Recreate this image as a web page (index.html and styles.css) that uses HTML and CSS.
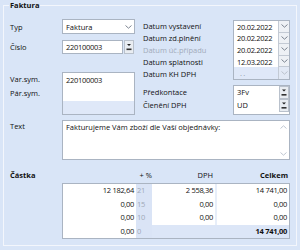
FILE: index.html
```html
<!DOCTYPE html>
<html lang="cs">
<head>
<meta charset="utf-8">
<link rel="stylesheet" href="styles.css">
</head>
<body>
<fieldset class="frame">
  <legend class="frame-title">Faktura</legend>
  <div class="top">
    <div class="left">
      <div class="field">
        <span class="lbl">Typ</span>
        <div class="combo">
          <span class="combo-val">Faktura</span>
          <svg class="chev" width="7" height="4" viewBox="0 0 7 4"><path d="M0.5 0.5 L3.5 3.2 L6.5 0.5" fill="none" stroke="#6f7886" stroke-width="0.9"/></svg>
        </div>
      </div>
      <div class="field field-num">
        <span class="lbl">Číslo</span>
        <span class="input num-input">220100003</span>
        <span class="lookup-btn"><svg width="8" height="12" viewBox="0 0 8 12"><path d="M2 3 L6 3 L4 5 Z" fill="#222"/><rect x="1.5" y="7.5" width="5" height="1.6" fill="#333"/></svg></span>
      </div>
      <div class="field field-sym">
        <div class="lbl-col">
          <span class="lbl-row">Var.sym.</span>
          <span class="lbl-row">Pár.sym.</span>
        </div>
        <div class="symbox">
          <span class="sym-cell">220100003</span>
          <span class="sym-cell"></span>
          <span class="sym-rest"></span>
        </div>
      </div>
    </div>
    <div class="right">
      <div class="group">
        <div class="lbl-col">
          <span class="date-lbl">Datum vystavení</span>
          <span class="date-lbl">Datum zd.plnění</span>
          <span class="date-lbl disabled">Datum úč.případu</span>
          <span class="date-lbl">Datum splatnosti</span>
          <span class="date-lbl">Datum KH DPH</span>
        </div>
        <div class="datebox">
          <div class="drow"><span class="dval">20.02.2022</span><span class="dbtn"><svg width="7" height="4" viewBox="0 0 7 4"><path d="M0.5 0.5 L3.5 3.2 L6.5 0.5" fill="none" stroke="#6f7886" stroke-width="0.9"/></svg></span></div>
          <div class="drow"><span class="dval">20.02.2022</span><span class="dbtn"><svg width="7" height="4" viewBox="0 0 7 4"><path d="M0.5 0.5 L3.5 3.2 L6.5 0.5" fill="none" stroke="#6f7886" stroke-width="0.9"/></svg></span></div>
          <div class="drow"><span class="dval">20.02.2022</span><span class="dbtn"><svg width="7" height="4" viewBox="0 0 7 4"><path d="M0.5 0.5 L3.5 3.2 L6.5 0.5" fill="none" stroke="#6f7886" stroke-width="0.9"/></svg></span></div>
          <div class="drow"><span class="dval">12.03.2022</span><span class="dbtn"><svg width="7" height="4" viewBox="0 0 7 4"><path d="M0.5 0.5 L3.5 3.2 L6.5 0.5" fill="none" stroke="#6f7886" stroke-width="0.9"/></svg></span></div>
          <div class="drow drow-off"><span class="dval">. .</span><span class="dbtn"><svg width="7" height="4" viewBox="0 0 7 4"><path d="M0.5 0.5 L3.5 3.2 L6.5 0.5" fill="none" stroke="#b5bcc7" stroke-width="0.9"/></svg></span></div>
        </div>
      </div>
      <div class="group group-pred">
        <div class="lbl-col pred-lbls">
          <span class="pred-lbl">Předkontace</span>
          <span class="pred-lbl">Členění DPH</span>
        </div>
        <div class="predbox">
          <span class="pval">3Fv</span>
          <span class="lookup-btn small"><svg width="8" height="11" viewBox="0 0 8 11"><path d="M2 2.5 L6 2.5 L4 4.5 Z" fill="#222"/><rect x="1.5" y="7" width="5" height="1.6" fill="#333"/></svg></span>
          <span class="pval">UD</span>
          <span class="lookup-btn small"><svg width="8" height="11" viewBox="0 0 8 11"><path d="M2 2.5 L6 2.5 L4 4.5 Z" fill="#222"/><rect x="1.5" y="7" width="5" height="1.6" fill="#333"/></svg></span>
        </div>
      </div>
    </div>
  </div>
  <div class="text-row">
    <span class="lbl text-lbl">Text</span>
    <div class="memo">
      <span class="memo-text">Fakturujeme Vám zboží dle Vaší objednávky:</span>
      <span class="memo-bar">
        <svg width="7" height="4" viewBox="0 0 7 4"><path d="M0.5 3.5 L3.5 0.8 L6.5 3.5" fill="none" stroke="#b8c0cc" stroke-width="0.9"/></svg>
        <svg width="7" height="4" viewBox="0 0 7 4"><path d="M0.5 0.5 L3.5 3.2 L6.5 0.5" fill="none" stroke="#b8c0cc" stroke-width="0.9"/></svg>
      </span>
    </div>
  </div>
  <div class="sum-head">
    <span class="sh-title">Částka</span>
    <span class="sh-pct">+ %</span>
    <span class="sh-dph">DPH</span>
    <span class="sh-total">Celkem</span>
  </div>
  <div class="sum-row">
    <div class="sum-table">
      <span class="c amt">12 182,64</span><span class="c pct">21</span><span class="c dph">2 558,36</span><span class="c gap"></span><span class="c tot">14 741,00</span>
      <span class="c amt">0,00</span><span class="c pct">15</span><span class="c dph">0,00</span><span class="c gap"></span><span class="c tot">0,00</span>
      <span class="c amt">0,00</span><span class="c pct">10</span><span class="c dph">0,00</span><span class="c gap"></span><span class="c tot">0,00</span>
      <span class="c amt">0,00</span><span class="c pct">0</span><span class="c dph off"></span><span class="c gap off"></span><span class="c tot off grand">14 741,00</span>
    </div>
  </div>
</fieldset>
</body>
</html>
```
FILE: styles.css
```css
html, body {
  margin: 0;
  padding: 0;
}
body {
  width: 300px;
  height: 250px;
  overflow: hidden;
  background: #d9e5f7;
  font-family: "Open Sans", "Noto Sans", sans-serif;
  font-size: 7.5px;
  color: #111;
}
.frame {
  margin: 0 3px;
  padding: 8px 6px 6px 6px;
  border: 1px solid #f3f6fc;
  min-width: 0;
}
.frame-title {
  margin-left: -1px;
  padding: 0 1px;
  font-weight: bold;
  line-height: 11px;
}
.top {
  display: flex;
  gap: 8px;
}
.left {
  width: 125px;
  display: flex;
  flex-direction: column;
}
.right {
  width: 147px;
  margin-top: 1px;
  display: flex;
  flex-direction: column;
}
.field {
  display: flex;
  align-items: center;
}
.lbl {
  width: 52px;
  flex: none;
}
.combo {
  box-sizing: border-box;
  width: 73px;
  height: 15px;
  border: 1px solid #aab4c2;
  background: #fff;
  display: flex;
  align-items: center;
  justify-content: space-between;
  padding: 0 2px 0 3px;
}
.field-num {
  margin-top: 6px;
}
.input {
  box-sizing: border-box;
  height: 14px;
  border: 1px solid #aab4c2;
  background: #fff;
  display: flex;
  align-items: center;
  padding-left: 3px;
}
.num-input {
  width: 61px;
  letter-spacing: -0.3px;
}
.lookup-btn {
  box-sizing: border-box;
  width: 10px;
  height: 14px;
  margin-left: 1px;
  border: 1px solid #b9c1cc;
  background: #e9edf2;
  display: flex;
  align-items: center;
  justify-content: center;
}
.lookup-btn.small {
  height: 13px;
  margin-left: 0;
}
.field-sym {
  margin-top: 18px;
  align-items: flex-start;
}
.lbl-col {
  display: flex;
  flex-direction: column;
  flex: none;
}
.field-sym .lbl-col {
  width: 52px;
}
.lbl-row {
  height: 14px;
  line-height: 14px;
}
.symbox {
  box-sizing: border-box;
  width: 73px;
  height: 43px;
  border: 1px solid #aab4c2;
  display: flex;
  flex-direction: column;
}
.sym-cell {
  height: 14px;
  line-height: 14px;
  background: #fff;
  padding-left: 3px;
  letter-spacing: -0.3px;
}
.sym-rest {
  flex: 1;
  background: #dfe8f8;
}
.group {
  display: flex;
}
.group .lbl-col {
  width: 90px;
}
.date-lbl {
  height: 12px;
  line-height: 12px;
}
.disabled {
  color: #a2abba;
}
.datebox {
  box-sizing: border-box;
  width: 57px;
  height: 60px;
  border: 1px solid #aab4c2;
  display: flex;
  flex-direction: column;
}
.drow {
  flex: 1;
  display: flex;
}
.dval {
  flex: 1;
  background: #fff;
  padding-left: 3px;
  display: flex;
  align-items: center;
  letter-spacing: -0.3px;
}
.dbtn {
  box-sizing: border-box;
  width: 11px;
  background: #eef1f5;
  border-left: 1px solid #c3cad4;
  border-bottom: 1px solid #c3cad4;
  display: flex;
  align-items: center;
  justify-content: center;
}
.drow-off .dval {
  background: #dfe8f8;
  color: #8f99a8;
  padding-left: 6px;
}
.drow-off .dbtn {
  background: #e2e9f5;
  border-bottom: none;
}
.group-pred {
  margin-top: 5px;
}
.pred-lbls {
  padding-top: 1px;
}
.pred-lbl {
  height: 13px;
  line-height: 13px;
}
.predbox {
  box-sizing: border-box;
  width: 57px;
  height: 30px;
  border: 1px solid #aab4c2;
  background: #fff;
  display: grid;
  grid-template-columns: 1fr 10px;
  grid-template-rows: 13px 13px;
  column-gap: 2px;
  align-content: start;
}
.pval {
  padding-left: 3px;
  line-height: 13px;
}
.text-row {
  margin-top: 5px;
  display: flex;
  align-items: flex-start;
}
.text-lbl {
  line-height: 12px;
}
.memo {
  box-sizing: border-box;
  width: 228px;
  height: 40px;
  border: 1px solid #aab4c2;
  background: #fff;
  display: flex;
  justify-content: space-between;
  padding: 0 2px 2px 3px;
}
.memo-text {
  line-height: 12px;
}
.memo-bar {
  display: flex;
  flex-direction: column;
  justify-content: space-between;
  padding-top: 4px;
  padding-bottom: 1px;
}
.sum-head {
  margin-top: 9px;
  display: grid;
  grid-template-columns: 52px 74px 16px 63px 2px 73px;
  line-height: 12px;
}
.sh-title {
  font-weight: bold;
}
.sh-pct {
  grid-column: 3;
  justify-self: end;
  white-space: nowrap;
}
.sh-dph {
  grid-column: 4;
  justify-self: end;
  padding-right: 2px;
}
.sh-total {
  grid-column: 6;
  justify-self: end;
  font-weight: bold;
  padding-right: 2px;
}
.sum-row {
  margin-top: 2px;
  padding-left: 52px;
}
.sum-table {
  box-sizing: border-box;
  width: 228px;
  border: 1px solid #aab4c2;
  display: grid;
  grid-template-columns: 73px 16px 63px 2px 72px;
  grid-auto-rows: 13.5px;
}
.c {
  line-height: 13.5px;
  background: #fff;
  text-align: right;
  padding-right: 2px;
  letter-spacing: -0.3px;
}
.c.pct {
  background: #dae4f6;
  color: #a0a9b7;
  text-align: left;
  padding: 0 0 0 1px;
}
.c.gap {
  background: #e7eef9;
  padding: 0;
}
.c.off {
  background: #dce6f7;
}
.grand {
  font-weight: bold;
}
```
